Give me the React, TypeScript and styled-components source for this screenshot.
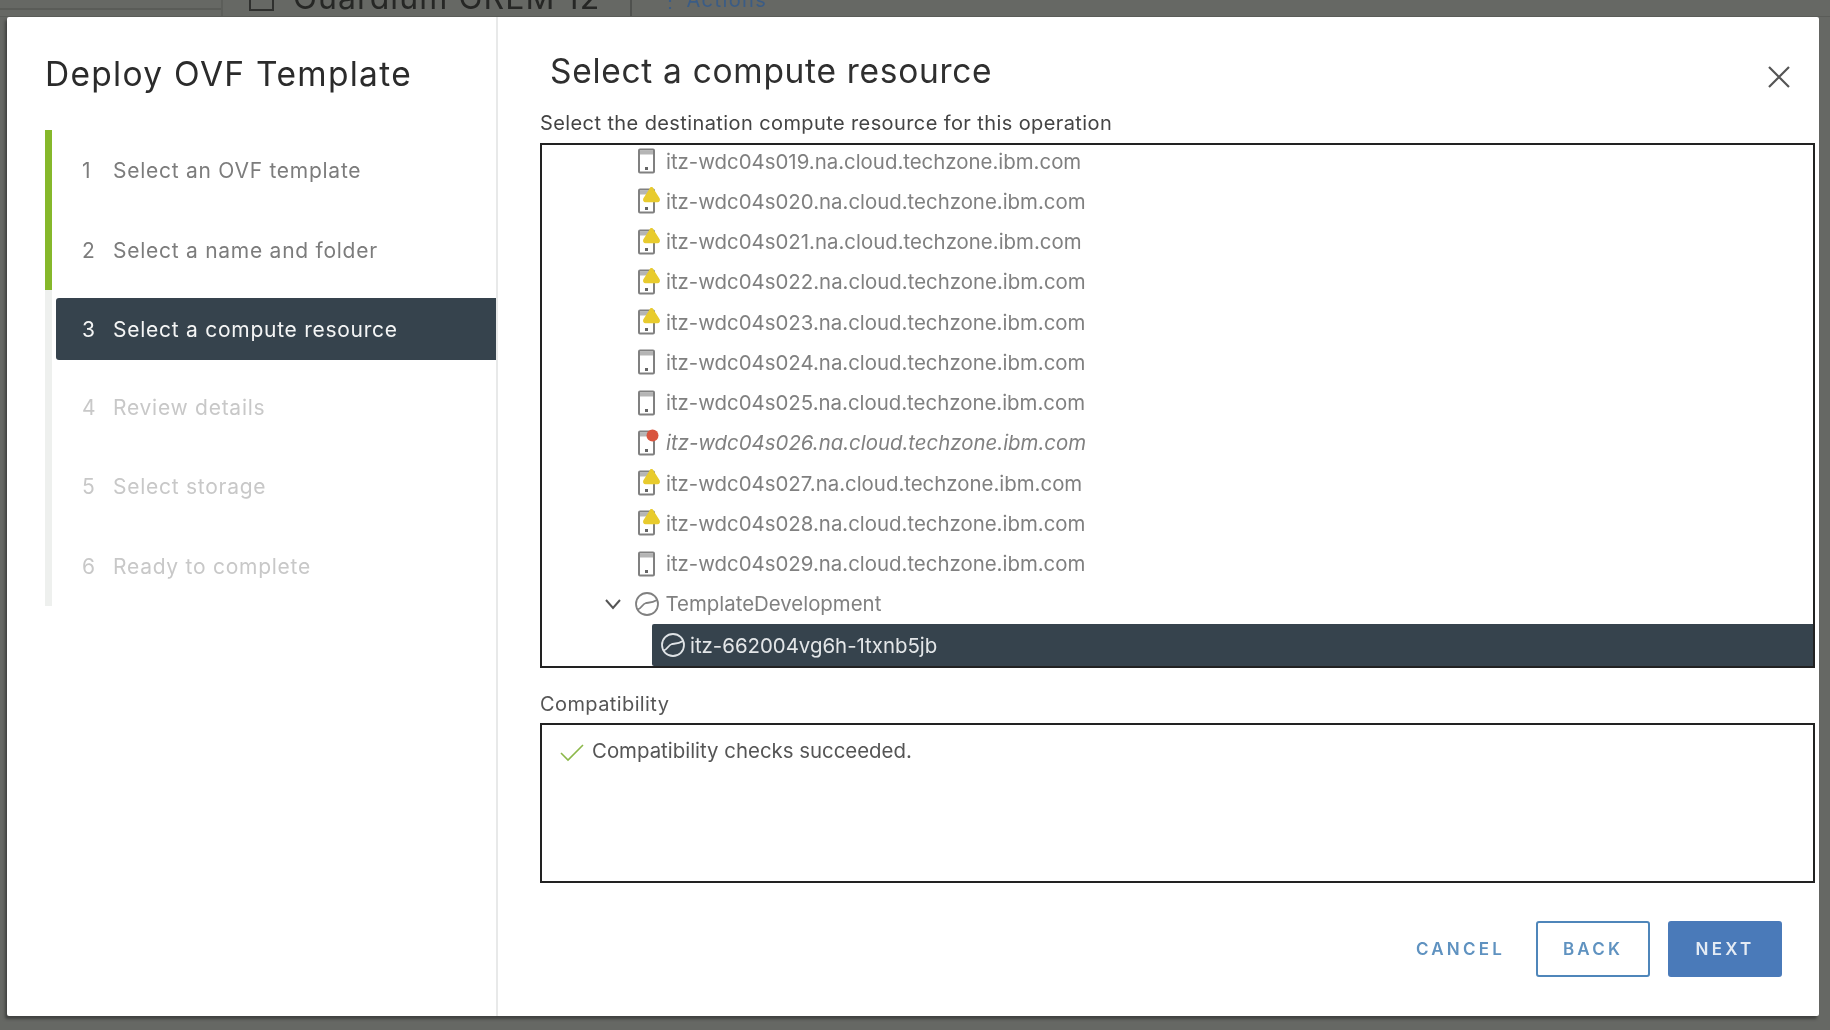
import React from "react";
import styled, { createGlobalStyle } from "styled-components";

const Global = createGlobalStyle`
  html, body { margin: 0; padding: 0; height: 100%; background: #666864; overflow: hidden; }
  #root { height: 100%; }
  * { box-sizing: border-box; }
`;

const Page = styled.div`
  width: 1830px;
  height: 1030px;
  display: flex;
  flex-direction: column;
  background: #666864;
  font-family: Inter, "Noto Sans", sans-serif;
  filter: blur(0.6px);
  overflow: hidden;
`;

const TopStrip = styled.div`
  height: 17px;
  flex: none;
  display: flex;
  overflow: hidden;
  border-bottom: 1px solid #5a5c58;
`;

const TopLeft = styled.div`
  width: 223px;
  border-right: 2px solid #5c5e5a;
  position: relative;
  &::after {
    content: "";
    position: absolute;
    left: 0;
    right: 0;
    top: 8px;
    height: 2px;
    background: #5a5c58;
  }
`;

const TabTitle = styled.div`
  width: 409px;
  height: 17px;
  border-right: 2px solid #4f514e;
  display: flex;
  gap: 19px;
  padding-left: 26px;
  align-items: flex-end;
`;

const TabBox = styled.span`
  width: 25px;
  height: 15px;
  margin-top: -8px;
  border: 2px solid #2f302e;
  border-top: 0;
  flex: none;
  margin-bottom: 6px;
`;

const TabText = styled.span`
  font-size: 32px;
  line-height: 32px;
  letter-spacing: 1.1px;
  color: #262725;
  white-space: nowrap;
  margin-bottom: 3px;
`;

const TabLink = styled.span`
  margin-left: 28px;
  font-size: 20px;
  line-height: 20px;
  letter-spacing: 1.4px;
  word-spacing: -2px;
  color: #3b5c85;
  white-space: nowrap;
  margin-top: -10px;
`;

const Modal = styled.div`
  width: 1812px;
  height: 999px;
  margin-left: 7px;
  background: #fff;
  display: flex;
  flex: none;
  border-radius: 2px;
  box-shadow: -2px 3px 3px rgba(40, 40, 40, 0.6);
`;

const Sidebar = styled.aside`
  width: 491px;
  flex: none;
  border-right: 2px solid #e8e9e9;
  padding: 35px 0 0 38px;
`;

const WizardTitle = styled.h1`
  margin: 0 0 34px;
  font-weight: 400;
  font-size: 33.5px;
  line-height: 44px;
  letter-spacing: 1.3px;
  color: #2b2b2b;
  white-space: nowrap;
`;

const Steps = styled.ol`
  list-style: none;
  margin: 0;
  padding: 0;
  width: 451px;
  background: linear-gradient(to right, #eef0ee 7px, transparent 7px);
`;

const Step = styled.li<{ $state: "done" | "active" | "todo"; $h: number }>`
  height: ${(p) => p.$h}px;
  margin-left: ${(p) => (p.$state === "active" ? "11px" : "0")};
  margin-bottom: ${(p) => (p.$state === "active" ? "8px" : "0")};
  margin-top: ${(p) => (p.$state === "active" ? "8px" : "0")};
  display: flex;
  align-items: center;
  font-size: 21px;
  letter-spacing: 0.74px;
  color: ${(p) => (p.$state === "done" ? "#7c7c7c" : p.$state === "active" ? "#f4f5f5" : "#c8c8c8")};
  background: ${(p) => (p.$state === "active" ? "#36434d" : "transparent")};
  border-left: ${(p) => (p.$state === "done" ? "7px solid #86b82b" : "0")};
  border-radius: ${(p) => (p.$state === "active" ? "3px 0 0 3px" : "0")};
  padding-left: ${(p) => (p.$state === "active" ? "26px" : p.$state === "done" ? "30px" : "37px")};
`;

const StepNum = styled.span`
  width: 31px;
  flex: none;
`;

const Main = styled.main`
  flex: 1;
  min-width: 0;
  padding: 31px 4px 0 42px;
  display: flex;
  flex-direction: column;
  position: relative;
`;

const MainTitle = styled.h2`
  margin: 0 0 0 10px;
  font-weight: 400;
  font-size: 33.5px;
  line-height: 46px;
  letter-spacing: 0.7px;
  color: #2f2f2f;
  white-space: nowrap;
`;

const CloseBtn = styled.button`
  position: absolute;
  top: 48px;
  right: 28px;
  width: 24px;
  height: 24px;
  padding: 0;
  border: 0;
  background: none;
  color: #555;
  display: flex;
`;

const FieldLabel = styled.div`
  font-size: 20px;
  line-height: 24px;
  letter-spacing: 0.4px;
  color: #444;
  white-space: nowrap;
`;

const FirstLabel = styled(FieldLabel)`
  margin-top: 17px;
  margin-bottom: 8px;
`;

const SecondLabel = styled(FieldLabel)`
  margin-top: 24px;
  margin-bottom: 7px;
  color: #555;
`;

const TreeBox = styled.div`
  height: 525px;
  border: 2px solid #222;
  overflow: hidden;
`;

const TreeList = styled.div`
  margin-top: -4px;
`;

const Row = styled.div<{ $italic?: boolean }>`
  height: 40.25px;
  display: flex;
  align-items: center;
  padding-left: 95px;
  font-size: 20.4px;
  color: #808080;
  font-style: ${(p) => (p.$italic ? "italic" : "normal")};
  white-space: nowrap;
`;

const ChevronCell = styled.span`
  width: 24px;
  margin-left: -36px;
  margin-right: 8px;
  display: flex;
  color: #555;
`;

const HostCell = styled.span`
  width: 28px;
  margin-right: 1px;
  flex: none;
  display: flex;
`;

const ClusterCell = styled.span`
  width: 28px;
  margin-right: 4.5px;
  flex: none;
  display: flex;
`;

const SelectedRow = styled.div`
  height: 42px;
  margin-left: 110px;
  background: #36434d;
  display: flex;
  align-items: center;
  padding-left: 7px;
  gap: 3px;
  color: #e3e6e8;
  font-size: 20.4px;
  border-radius: 2px 0 0 2px;
`;

const CompatBox = styled.div`
  height: 160px;
  border: 2px solid #222;
  padding: 12px 18px;
  display: flex;
  align-items: flex-start;
  gap: 8px;
  color: #555;
  font-size: 20.4px;
  line-height: 28px;
`;

const CheckMark = styled.svg`
  margin-top: 3px;
  flex: none;
`;

const Footer = styled.div`
  display: flex;
  justify-content: flex-end;
  align-items: center;
  margin-top: 38px;
  padding-right: 33px;
`;

const Button = styled.button<{ $kind: "flat" | "outline" | "solid" }>`
  height: 56px;
  width: ${(p) => (p.$kind === "flat" ? "auto" : "114px")};
  margin-left: ${(p) => (p.$kind === "flat" ? "0" : p.$kind === "outline" ? "31px" : "18px")};
  font-family: Inter, "Noto Sans", sans-serif;
  font-size: 17px;
  font-weight: 600;
  letter-spacing: 3.2px;
  border-radius: 3px;
  padding: 0;
  color: ${(p) => (p.$kind === "solid" ? "#e4ebf4" : "#5f92c0")};
  background: ${(p) => (p.$kind === "solid" ? "#4a7ab9" : "#fff")};
  border: ${(p) => (p.$kind === "flat" ? "0" : "2px solid #4f86ba")};
  border-color: ${(p) => (p.$kind === "solid" ? "#4a7ab9" : "#4f86ba")};
`;

const HostIcon = ({ status }: { status?: "warn" | "error" }) => (
  <svg width="28" height="28" viewBox="0 0 28 28">
    <rect x="2" y="2.5" width="15" height="23" rx="1" fill="none" stroke="#808080" strokeWidth="2" />
    <rect x="3" y="3.5" width="13" height="4" fill="#b5b5b5" />
    <rect x="8" y="20" width="3" height="3" fill="#666" />
    {status === "warn" && (
      <path d="M14.5 1 L21.5 12 Q22 14 20.5 14 H8.5 Q7 14 7.5 12 Z" fill="#e8cb2e" stroke="#e8cb2e" strokeWidth="2.6" strokeLinejoin="round" />
    )}
    {status === "error" && <circle cx="15.5" cy="6.5" r="6" fill="#d9553f" />}
  </svg>
);

const ClusterIcon = ({ color }: { color: string }) => (
  <svg width="28" height="28" viewBox="0 0 28 28" fill="none" stroke={color} strokeWidth="1.8">
    <circle cx="14" cy="14" r="11" />
    <path d="M4.5 19.5 C8 19.5 9 14 13 13 C16 12.5 19 13 24 10" />
  </svg>
);

const hosts: { n: string; s?: "warn" | "error" }[] = [
  { n: "019" },
  { n: "020", s: "warn" },
  { n: "021", s: "warn" },
  { n: "022", s: "warn" },
  { n: "023", s: "warn" },
  { n: "024" },
  { n: "025" },
  { n: "026", s: "error" },
  { n: "027", s: "warn" },
  { n: "028", s: "warn" },
  { n: "029" },
];

const steps: { t: string; s: "done" | "active" | "todo"; h: number }[] = [
  { t: "Select an OVF template", s: "done", h: 80 },
  { t: "Select a name and folder", s: "done", h: 80 },
  { t: "Select a compute resource", s: "active", h: 62 },
  { t: "Review details", s: "todo", h: 78 },
  { t: "Select storage", s: "todo", h: 81 },
  { t: "Ready to complete", s: "todo", h: 79 },
];

export default function App() {
  return (
    <Page>
      <Global />
      <TopStrip>
        <TopLeft />
        <TabTitle>
          <TabBox />
          <TabText>Guardium GREM 12</TabText>
        </TabTitle>
        <TabLink>⋮ Actions</TabLink>
      </TopStrip>
      <Modal>
        <Sidebar>
          <WizardTitle>Deploy OVF Template</WizardTitle>
          <Steps>
            {steps.map((s, i) => (
              <Step key={s.t} $state={s.s} $h={s.h}>
                <StepNum>{i + 1}</StepNum>
                {s.t}
              </Step>
            ))}
          </Steps>
        </Sidebar>
        <Main>
          <MainTitle>Select a compute resource</MainTitle>
          <CloseBtn aria-label="Close">
            <svg width="24" height="24" viewBox="0 0 24 24" stroke="currentColor" strokeWidth="2.2">
              <path d="M2 2 L22 22 M22 2 L2 22" />
            </svg>
          </CloseBtn>
          <FirstLabel>Select the destination compute resource for this operation</FirstLabel>
          <TreeBox>
            <TreeList>
              {hosts.map((h) => (
                <Row key={h.n} $italic={h.s === "error"}>
                  <HostCell>
                    <HostIcon status={h.s} />
                  </HostCell>
                  {`itz-wdc04s${h.n}.na.cloud.techzone.ibm.com`}
                </Row>
              ))}
              <Row>
                <ChevronCell>
                  <svg width="24" height="24" viewBox="0 0 24 24" fill="none" stroke="currentColor" strokeWidth="2">
                    <path d="M5 8 L12 16 L19 8" />
                  </svg>
                </ChevronCell>
                <ClusterCell>
                  <ClusterIcon color="#808080" />
                </ClusterCell>
                TemplateDevelopment
              </Row>
              <SelectedRow>
                <ClusterIcon color="#dfe3e6" />
                itz-662004vg6h-1txnb5jb
              </SelectedRow>
            </TreeList>
          </TreeBox>
          <SecondLabel>Compatibility</SecondLabel>
          <CompatBox>
            <CheckMark width="24" height="24" viewBox="0 0 24 24" fill="none" stroke="#8cb84a" strokeWidth="1.6">
              <path d="M1 13 L8 20 L23 5" />
            </CheckMark>
            Compatibility checks succeeded.
          </CompatBox>
          <Footer>
            <Button $kind="flat">CANCEL</Button>
            <Button $kind="outline">BACK</Button>
            <Button $kind="solid">NEXT</Button>
          </Footer>
        </Main>
      </Modal>
    </Page>
  );
}
